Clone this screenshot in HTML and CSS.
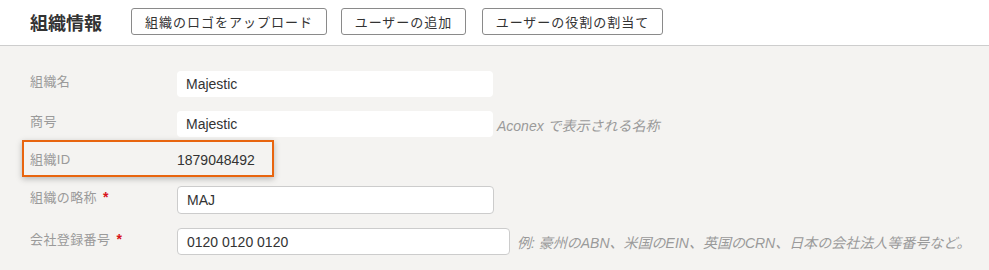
FILE: index.html
```html
<!DOCTYPE html>
<html>
<head>
    <title>組織情報</title>
    <link rel="stylesheet" href="styles.css">
</head>
<body>
    <div class="page-header">
        <h1>組織情報</h1>
        <button class="btn btn-logo">組織のロゴをアップロード</button>
        <button class="btn btn-user">ユーザーの追加</button>
        <button class="btn btn-role">ユーザーの役割の割当て</button>
    </div>

    <div class="org-form">
        <div class="form-row row-name">
            <label class="form-label">組織名</label>
            <input type="text" class="field field-plain" value="Majestic">
        </div>
        <div class="form-row row-trade">
            <label class="form-label">商号</label>
            <input type="text" class="field field-plain" value="Majestic">
            <span class="help">Aconex で表示される名称</span>
        </div>
        <div class="form-row row-id">
            <label class="form-label">組織ID</label>
            <span class="value">1879048492</span>
        </div>
        <div class="form-row row-short">
            <label class="form-label">組織の略称 <span class="req">*</span></label>
            <input type="text" class="field field-short" value="MAJ">
        </div>
        <div class="form-row row-reg">
            <label class="form-label">会社登録番号 <span class="req">*</span></label>
            <input type="text" class="field field-reg" value="0120 0120 0120">
            <span class="help">例: 豪州のABN、米国のEIN、英国のCRN、日本の会社法人等番号など。</span>
        </div>
    </div>
</body>
</html>
```

FILE: styles.css
```css
body {
    margin: 0;
    font-family: "Liberation Sans", "Noto Sans CJK JP", sans-serif;
    background-color: #f4f3f1;
    color: #333;
}
.page-header {
    display: flex;
    align-items: center;
    height: 45px;
    padding: 0 0 0 30px;
    background-color: #fff;
    border-bottom: 1px solid #cdcdcd;
}
.page-header h1 {
    margin: 0 29px 2px 0;
    font-size: 18px;
    font-weight: bold;
    color: #333;
}
.btn {
    height: 27px;
    margin: -2px 14px 0 0;
    padding: 0;
    white-space: nowrap;
    text-align: center;
    background-color: #fff;
    border: 1px solid #8a8a8a;
    border-radius: 3px;
    font-family: inherit;
    font-size: 13px;
    letter-spacing: 1px;
    color: #333;
    cursor: pointer;
}
.btn-logo { width: 196px; }
.btn-user { width: 125px; margin-right: 16px; }
.btn-role { width: 181px; }

.org-form {
    padding: 25px 0 0 30px;
}
.form-row {
    position: relative;
    display: flex;
    align-items: flex-start;
}
.row-name { margin-bottom: 14px; }
.row-trade { margin-bottom: 10px; }
.row-id { margin-bottom: 13px; height: 26px; align-items: center; }
.row-short { margin-bottom: 14px; }

/* annotation box around the ID row */
.row-id::after {
    content: "";
    position: absolute;
    left: -8px;
    top: -7px;
    width: 248px;
    height: 33px;
    border: 2px solid #e8650f;
    box-shadow: 0 2px 6px rgba(0, 0, 0, 0.25);
}
.form-label {
    width: 147px;
    flex-shrink: 0;
    padding-top: 2px;
    font-size: 13px;
    line-height: 18px;
    letter-spacing: 0.4px;
    color: #9a9a9a;
}
.row-id .form-label {
    padding-top: 0;
}
.req {
    color: #d8141b;
    font-weight: bold;
    font-size: 14px;
    margin-left: 2px;
}
.value {
    font-size: 14px;
    color: #333;
}
.field {
    box-sizing: border-box;
    height: 26px;
    padding: 0 9px;
    font-family: inherit;
    font-size: 14px;
    color: #333;
    background-color: #fff;
    border-radius: 4px;
}
.field-plain {
    width: 316px;
    border: none;
}
.field-short {
    width: 317px;
    height: 28px;
    border: 1px solid #ccc;
}
.field-reg {
    width: 333px;
    height: 27px;
    border: 1px solid #ccc;
}
.help {
    margin-left: 4px;
    padding-top: 4px;
    font-size: 14px;
    font-style: italic;
    color: #9a9a9a;
}
.row-reg .help {
    margin-left: 7px;
}
```
